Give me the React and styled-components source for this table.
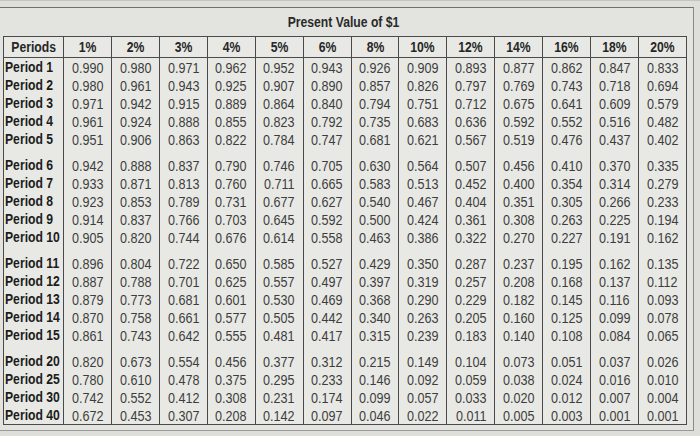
import styled, { createGlobalStyle } from "styled-components";

const rates = ["1%", "2%", "3%", "4%", "5%", "6%", "8%", "10%", "12%", "14%", "16%", "18%", "20%"];

const groups = [
  [
    ["Period 1", "0.990 0.980 0.971 0.962 0.952 0.943 0.926 0.909 0.893 0.877 0.862 0.847 0.833"],
    ["Period 2", "0.980 0.961 0.943 0.925 0.907 0.890 0.857 0.826 0.797 0.769 0.743 0.718 0.694"],
    ["Period 3", "0.971 0.942 0.915 0.889 0.864 0.840 0.794 0.751 0.712 0.675 0.641 0.609 0.579"],
    ["Period 4", "0.961 0.924 0.888 0.855 0.823 0.792 0.735 0.683 0.636 0.592 0.552 0.516 0.482"],
    ["Period 5", "0.951 0.906 0.863 0.822 0.784 0.747 0.681 0.621 0.567 0.519 0.476 0.437 0.402"],
  ],
  [
    ["Period 6", "0.942 0.888 0.837 0.790 0.746 0.705 0.630 0.564 0.507 0.456 0.410 0.370 0.335"],
    ["Period 7", "0.933 0.871 0.813 0.760 0.711 0.665 0.583 0.513 0.452 0.400 0.354 0.314 0.279"],
    ["Period 8", "0.923 0.853 0.789 0.731 0.677 0.627 0.540 0.467 0.404 0.351 0.305 0.266 0.233"],
    ["Period 9", "0.914 0.837 0.766 0.703 0.645 0.592 0.500 0.424 0.361 0.308 0.263 0.225 0.194"],
    ["Period 10", "0.905 0.820 0.744 0.676 0.614 0.558 0.463 0.386 0.322 0.270 0.227 0.191 0.162"],
  ],
  [
    ["Period 11", "0.896 0.804 0.722 0.650 0.585 0.527 0.429 0.350 0.287 0.237 0.195 0.162 0.135"],
    ["Period 12", "0.887 0.788 0.701 0.625 0.557 0.497 0.397 0.319 0.257 0.208 0.168 0.137 0.112"],
    ["Period 13", "0.879 0.773 0.681 0.601 0.530 0.469 0.368 0.290 0.229 0.182 0.145 0.116 0.093"],
    ["Period 14", "0.870 0.758 0.661 0.577 0.505 0.442 0.340 0.263 0.205 0.160 0.125 0.099 0.078"],
    ["Period 15", "0.861 0.743 0.642 0.555 0.481 0.417 0.315 0.239 0.183 0.140 0.108 0.084 0.065"],
  ],
  [
    ["Period 20", "0.820 0.673 0.554 0.456 0.377 0.312 0.215 0.149 0.104 0.073 0.051 0.037 0.026"],
    ["Period 25", "0.780 0.610 0.478 0.375 0.295 0.233 0.146 0.092 0.059 0.038 0.024 0.016 0.010"],
    ["Period 30", "0.742 0.552 0.412 0.308 0.231 0.174 0.099 0.057 0.033 0.020 0.012 0.007 0.004"],
    ["Period 40", "0.672 0.453 0.307 0.208 0.142 0.097 0.046 0.022 0.011 0.005 0.003 0.001 0.001"],
  ],
];

export default function App() {
  return (
    <>
      <GlobalStyle />
      <Page>
        <Frame>
          <Title>
            <Narrow>Present Value of $1</Narrow>
          </Title>
          <Table>
            <colgroup>
              <LabelCol />
              {rates.map((r) => (
                <col key={r} />
              ))}
            </colgroup>
            <thead>
              <tr>
                <HeadCell>
                  <Narrow>Periods</Narrow>
                </HeadCell>
                {rates.map((r) => (
                  <HeadCell key={r}>
                    <Narrow>{r}</Narrow>
                  </HeadCell>
                ))}
              </tr>
            </thead>
            {groups.map((rows, g) => (
              <tbody key={g}>
                {g > 0 && (
                  <tr>
                    {Array.from({ length: 14 }, (_, i) => (
                      <GapCell key={i} />
                    ))}
                  </tr>
                )}
                {rows.map(([label, values]) => (
                  <tr key={label}>
                    <LabelCell>
                      <Narrow $left>{label}</Narrow>
                    </LabelCell>
                    {values.split(" ").map((v, i) => (
                      <ValueCell key={i}>
                        <Narrow>{v}</Narrow>
                      </ValueCell>
                    ))}
                  </tr>
                ))}
              </tbody>
            ))}
          </Table>
        </Frame>
      </Page>
    </>
  );
}

const GlobalStyle = createGlobalStyle`
  body {
    margin: 0;
    background: #dedfda;
    font-family: "Liberation Sans", Arial, sans-serif;
  }
`;

const Page = styled.div`
  width: 700px;
  height: 436px;
  padding-top: 3px;
  border-top: 1px solid #c4c5c0;
  box-sizing: border-box;
  overflow: hidden;
`;

const Frame = styled.div`
  margin-top: 3px;
  width: 694px;
  height: 424px;
  border-top: 1px solid #707070;
  border-right: 1px solid #8a8a86;
  border-bottom: 1px solid #9a9b96;
  box-sizing: border-box;
  background: #e3e4df;
  display: flex;
  flex-direction: column;
`;

/* the print is a condensed face: squeeze Liberation Sans to match */
const Narrow = styled.span`
  display: inline-block;
  white-space: nowrap;
  transform: scaleX(0.84);
  transform-origin: ${(p) => (p.$left ? "left center" : "center")};
`;

const Title = styled.div`
  height: 28px;
  display: flex;
  align-items: center;
  justify-content: center;
  padding-right: 6px;
  font-size: 14.5px;
  font-weight: 700;
  color: #2a2a2a;
`;

const Table = styled.table`
  margin-left: 3px;
  width: 684px;
  border-collapse: collapse;
  table-layout: fixed;
  background: #e8e9e4;
  border: 1px solid #4a4a48;
`;

const LabelCol = styled.col`
  width: 60px;
`;

const HeadCell = styled.th`
  height: 20px;
  padding: 0;
  border: 1px solid #4a4a48;
  font-size: 14.5px;
  font-weight: 700;
  color: #262626;
  text-align: center;
`;

const LabelCell = styled.td`
  height: 18px;
  padding: 0 0 0 1px;
  border-left: 1px solid #4a4a48;
  border-right: 1px solid #4a4a48;
  font-size: 14.5px;
  font-weight: 700;
  color: #1c1c1c;
  white-space: nowrap;
  overflow: hidden;
  text-align: left;
`;

const ValueCell = styled.td`
  height: 18px;
  padding: 0;
  border-left: 1px solid #4a4a48;
  border-right: 1px solid #4a4a48;
  font-size: 15px;
  color: #3d3d3d;
  text-align: center;
`;

const GapCell = styled.td`
  height: 8px;
  padding: 0;
  border-left: 1px solid #4a4a48;
  border-right: 1px solid #4a4a48;
`;
